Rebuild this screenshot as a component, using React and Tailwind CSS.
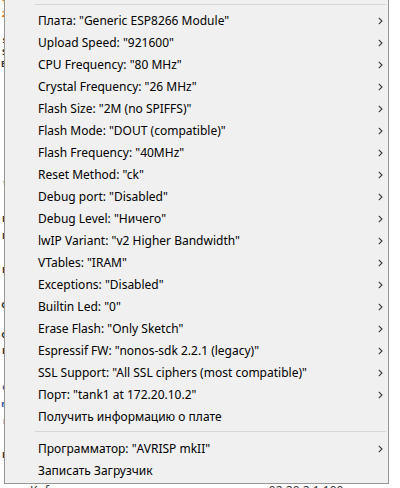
import React from "react";

const items = [
  { label: 'Плата: "Generic ESP8266 Module"', sub: true },
  { label: 'Upload Speed: "921600"', sub: true },
  { label: 'CPU Frequency: "80 MHz"', sub: true },
  { label: 'Crystal Frequency: "26 MHz"', sub: true },
  { label: 'Flash Size: "2M (no SPIFFS)"', sub: true },
  { label: 'Flash Mode: "DOUT (compatible)"', sub: true },
  { label: 'Flash Frequency: "40MHz"', sub: true },
  { label: 'Reset Method: "ck"', sub: true },
  { label: 'Debug port: "Disabled"', sub: true },
  { label: 'Debug Level: "Ничего"', sub: true },
  { label: 'lwIP Variant: "v2 Higher Bandwidth"', sub: true },
  { label: 'VTables: "IRAM"', sub: true },
  { label: 'Exceptions: "Disabled"', sub: true },
  { label: 'Builtin Led: "0"', sub: true },
  { label: 'Erase Flash: "Only Sketch"', sub: true },
  { label: 'Espressif FW: "nonos-sdk 2.2.1 (legacy)"', sub: true },
  { label: 'SSL Support: "All SSL ciphers (most compatible)"', sub: true },
  { label: 'Порт: "tank1 at 172.20.10.2"', sub: true },
  { label: "Получить информацию о плате", sub: false },
];

const bottomItems = [
  { label: 'Программатор: "AVRISP mkII"', sub: true },
  { label: "Записать Загрузчик", sub: false },
];

// edges of the window that sits behind the menu
const behind = [
  { y: "top-[-2px]", t: "1", c: "text-[#e07020]" },
  { y: "top-[10px]", t: "2", c: "text-[#e07020]" },
  { y: "top-[36px]", t: "s", c: "text-[#333]" },
  { y: "top-[48px]", t: "S", c: "text-[#333]" },
  { y: "top-[60px]", t: "B", c: "text-[#333]" },
  { y: "top-[179px]", t: "t", c: "text-[#20a0a0]" },
  { y: "top-[215px]", t: "E", c: "text-[#333]" },
  { y: "top-[232px]", t: "E", c: "text-[#333]" },
  { y: "top-[266px]", t: "E", c: "text-[#333]" },
  { y: "top-[301px]", t: "C", c: "text-[#333]" },
  { y: "top-[331px]", t: "C", c: "text-[#333]" },
  { y: "top-[347px]", t: "E", c: "text-[#333]" },
  { y: "top-[383px]", t: "c", c: "text-[#3050a0]" },
  { y: "top-[400px]", t: "n", c: "text-[#3050a0]" },
  { y: "top-[417px]", t: "r", c: "text-[#3050a0]" },
  { y: "top-[451px]", t: "E", c: "text-[#333]" },
];

function Chevron() {
  return (
    <svg width="5" height="8" viewBox="0 0 5 8" className="mr-[5px]">
      <path d="M0.8 0.8 L4 4 L0.8 7.2" fill="none" stroke="#3a3a3a" strokeWidth="1.1" />
    </svg>
  );
}

function Row({ label, sub }) {
  return (
    <div className="flex items-center justify-between h-[22px] pl-[33px]">
      <span className="text-[12px] text-black leading-none whitespace-nowrap">{label}</span>
      {sub && <Chevron />}
    </div>
  );
}

export default function App() {
  return (
    <div
      className="w-[400px] h-[488px] bg-white relative overflow-hidden"
      style={{ fontFamily: '"Noto Sans", "Open Sans", sans-serif' }}
    >
      <div className="flex">
        <div className="w-[4px] h-[484px] relative overflow-hidden">
          {behind.map((b, i) => (
            <span
              key={i}
              className={`absolute right-[-3px] ${b.y} text-[9px] font-bold leading-[8px] ${b.c}`}
            >
              {b.t}
            </span>
          ))}
        </div>
        <div className="w-[385px] h-[484px] bg-[#f0f0f0] border-l border-r border-b border-[#979797] flex flex-col">
          <div className="h-[4px]" />
          <div className="h-px bg-[#d7d7d7] ml-[30px] mr-[2px]" />
          <div className="h-[5px]" />
          {items.map((it) => (
            <Row key={it.label} {...it} />
          ))}
          <div className="h-[3px]" />
          <div className="h-px bg-[#d7d7d7] ml-[30px] mr-[2px]" />
          <div className="h-[6px]" />
          {bottomItems.map((it) => (
            <Row key={it.label} {...it} />
          ))}
        </div>
      </div>
      <div className="flex gap-[26px] pl-[30px] text-[12px] leading-none text-[#333] h-[4px] overflow-hidden">
        <span className="mt-[1px]">Knf</span>
        <span className="mt-[1px]">- - -</span>
        <span className="mt-[1px] ml-[150px]">02.20.2 1.100</span>
      </div>
    </div>
  );
}
